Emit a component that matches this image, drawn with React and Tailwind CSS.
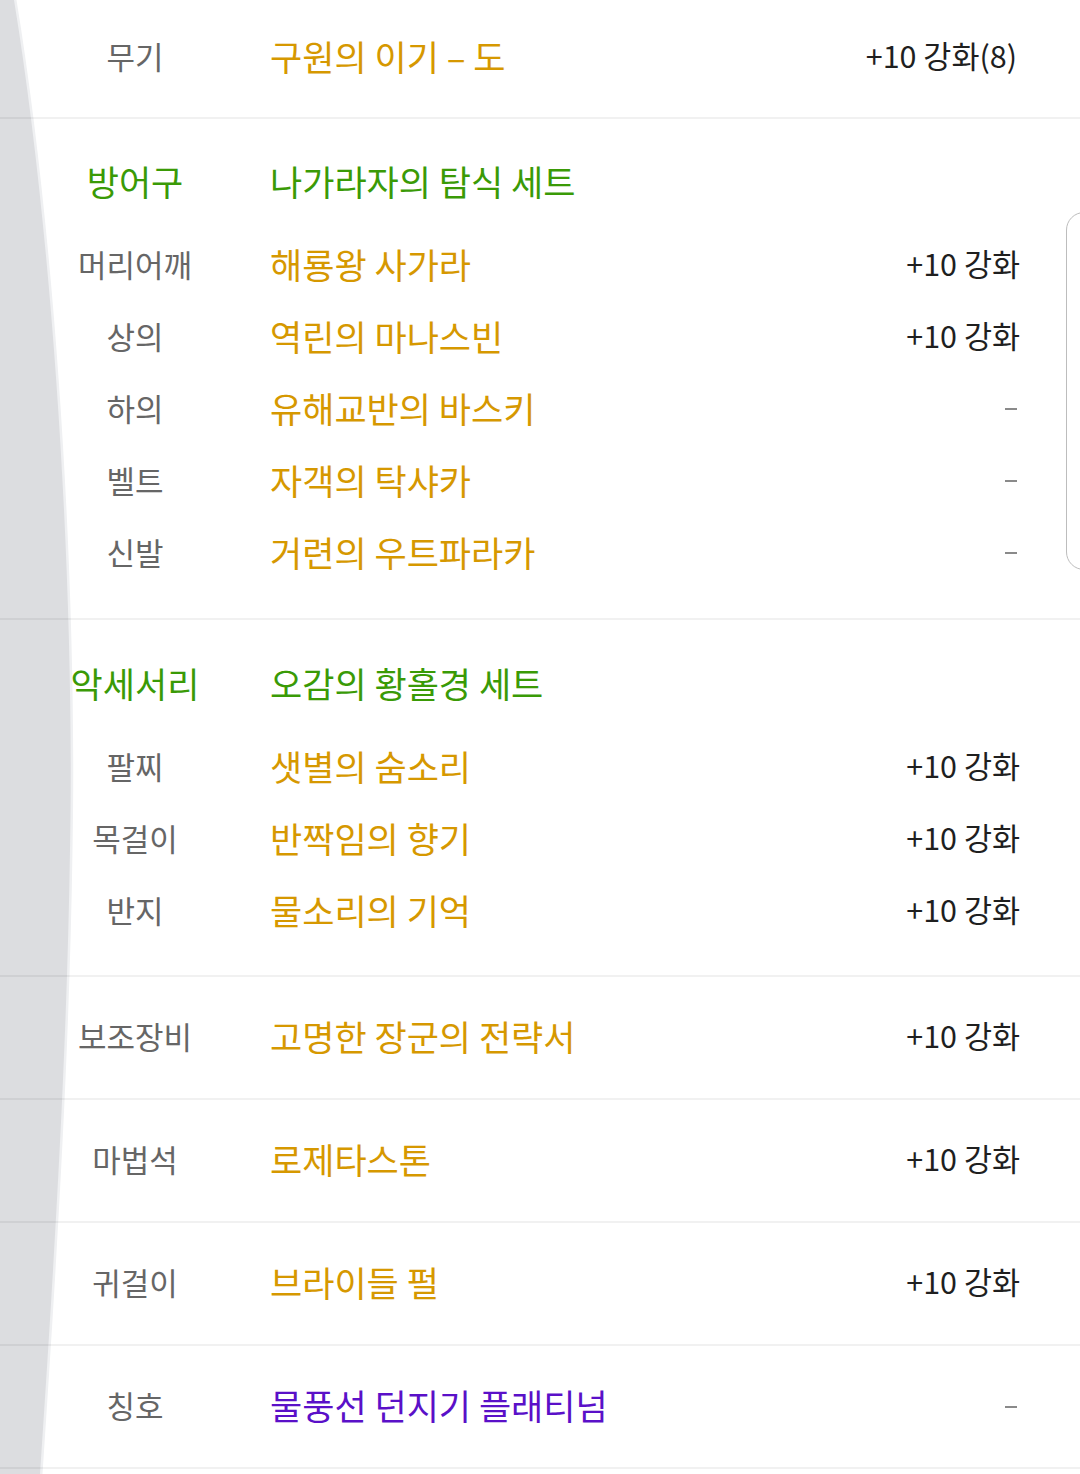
import React from "react";

const ORANGE = "text-[#d69800]";
const GREEN = "text-[#3a9a06]";
const PURPLE = "text-[#5a10c8]";

function Sep() {
  return <div className="h-[2px] w-full bg-[rgba(0,0,0,0.055)]" />;
}

function Right({ v }) {
  if (v === "-") {
    return (
      <div className="flex w-[200px] justify-end pr-[63px] pt-[4px]">
        <span className="block h-[2px] w-[12px] bg-[#8a8a8a]" />
      </div>
    );
  }
  return (
    <div className="w-[200px] pr-[60px] text-right text-[30.5px] leading-none text-[#1f1f1f] whitespace-nowrap">
      {v}
    </div>
  );
}

function Row({ label, name, value, color = ORANGE, h = "h-[72px]" }) {
  return (
    <div className={`flex items-center pb-[4px] ${h}`}>
      <div className="w-[270px] text-center text-[31px] leading-none text-[#666666]">{label}</div>
      <div className={`flex-1 text-[35px] leading-none ${color}`}>{name}</div>
      <Right v={value} />
    </div>
  );
}

function Header({ label, name }) {
  return (
    <div className="flex h-[72px] items-center pb-[4px]">
      <div className={`w-[270px] text-center text-[35px] leading-none ${GREEN}`}>{label}</div>
      <div className={`flex-1 text-[35px] leading-none ${GREEN}`}>{name}</div>
    </div>
  );
}

export default function App() {
  return (
    <div
      className="relative h-[1474px] w-[1080px] overflow-hidden bg-white"
      style={{ fontFamily: '"Noto Sans CJK KR", "Noto Sans", sans-serif' }}
    >
      <svg className="absolute left-0 top-0" width="120" height="1474" viewBox="0 0 120 1474">
        <path
          d="M0 0 L16.5 0 C57.5 250, 77.5 600, 72.5 850 C69.5 1050, 57.5 1250, 42.5 1474 L0 1474 Z"
          fill="#eff0f2"
        />
        <path
          d="M0 0 L14 0 C55 250, 75 600, 70 850 C67 1050, 55 1250, 40 1474 L0 1474 Z"
          fill="#dcdde0"
        />
      </svg>

      <div className="relative">
        {/* Weapon */}
        <div className="flex h-[117px] items-center pb-[6px]">
          <div className="w-[270px] text-center text-[31px] leading-none text-[#666666]">무기</div>
          <div className={`flex-1 text-[35px] leading-none ${ORANGE} whitespace-pre`}>구원의 이기 – 도</div>
          <div className="w-[240px] pr-[63px] text-right text-[30.5px] leading-none text-[#1f1f1f] whitespace-nowrap">
            +10 강화(8)
          </div>
        </div>
        <Sep />

        {/* Armor */}
        <div className="pb-[29px] pt-[27px]">
          <Header label="방어구" name="나가라자의 탐식 세트" />
          <div className="mt-[11px]">
            <Row label="머리어깨" name="해룡왕 사가라" value="+10 강화" />
            <Row label="상의" name="역린의 마나스빈" value="+10 강화" />
            <Row label="하의" name="유해교반의 바스키" value="-" />
            <Row label="벨트" name="자객의 탁샤카" value="-" />
            <Row label="신발" name="거련의 우트파라카" value="-" />
          </div>
        </div>
        <Sep />

        {/* Accessory */}
        <div className="pb-[28px] pt-[28px]">
          <Header label="악세서리" name="오감의 황홀경 세트" />
          <div className="mt-[11px]">
            <Row label="팔찌" name="샛별의 숨소리" value="+10 강화" />
            <Row label="목걸이" name="반짝임의 향기" value="+10 강화" />
            <Row label="반지" name="물소리의 기억" value="+10 강화" />
          </div>
        </div>
        <Sep />

        <Row label="보조장비" name="고명한 장군의 전략서" value="+10 강화" h="h-[121px]" />
        <Sep />
        <Row label="마법석" name="로제타스톤" value="+10 강화" h="h-[121px]" />
        <Sep />
        <Row label="귀걸이" name="브라이들 펄" value="+10 강화" h="h-[121px]" />
        <Sep />
        <Row label="칭호" name="물풍선 던지기 플래티넘" value="-" color={PURPLE} h="h-[121px]" />
        <Sep />
      </div>

      {/* right-edge handle */}
      <div className="absolute left-[1066px] top-[212px] h-[358px] w-[40px] rounded-[18px] border-[1.5px] border-[#bdbdbd] bg-white" />
    </div>
  );
}
